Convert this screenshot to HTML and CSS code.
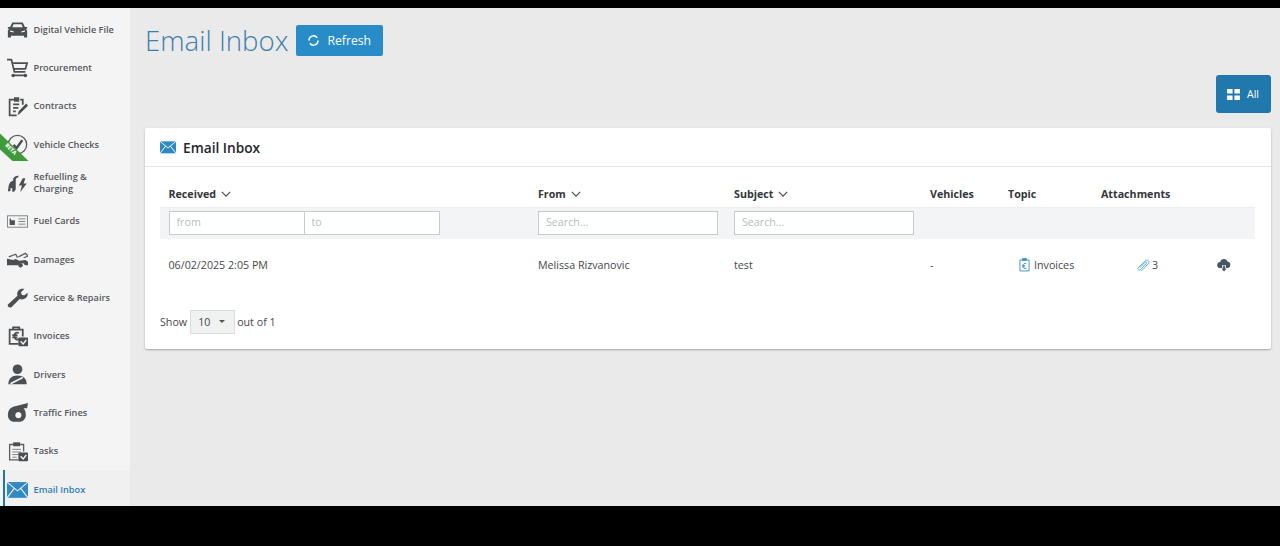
FILE: index.html
```html
<!DOCTYPE html>
<html lang="en">
<head>
<meta charset="utf-8">
<title>Email Inbox</title>
<link rel="stylesheet" href="styles.css">
</head>
<body>
<div class="frame">
  <nav class="sidebar">
    <a class="nav-item"><svg class="nav-icon" viewBox="0 0 24 24"><path fill-rule="evenodd" d="M6 4h12l2.500 5H23v2h-1.500l1.500 2v8h-3.500v-2h-15v2H1v-8l1.500-2H1V9h2.500zM7.500 6L6 9.500h12L16.500 6zM3.500 13v1.500l4 1V14zM20.500 13l-4 1v1.500l4-1z"/></svg><span>Digital Vehicle File</span></a>
    <a class="nav-item"><svg class="nav-icon" viewBox="0 0 24 24"><path class="stroke" d="M0 3h5l3.500 14H21M6 7h17l-2 6.500H7.500M6 21h16"/><circle cx="7" cy="21" r="2"/><circle cx="21" cy="21" r="2"/></svg><span>Procurement</span></a>
    <a class="nav-item"><svg class="nav-icon" viewBox="0 0 24 24"><path class="stroke" d="M18 10V4h-3M8 4H3v18h8M7 9.500h7M7 13.500h6M7 17.500h3"/><path d="M8 1.500h6v5H8zM12 22l1.500-5L22 8.500l2 2.500-8.500 8.500z"/></svg><span>Contracts</span></a>
    <a class="nav-item beta-item"><svg class="nav-icon" viewBox="0 0 24 24"><circle class="mid" cx="12" cy="12" r="10.500"/><path class="stroke thick" d="M7.500 12.500l3.500 3.500 6.500-9"/></svg><span>Vehicle Checks</span><b class="beta"><i>BETA</i></b></a>
    <a class="nav-item"><svg class="nav-icon" viewBox="0 0 24 24"><path d="M1 22l1-7c1-3 2.500-4.500 5-5V8c1-2.500 3-3.500 6-4v2c-1.500.300-2.500 1-3 2.500V20l-2 2.500H6v-4H4V22z M18 7l-4.500 8.500h3.500L15 23l7.500-10H19l2-6z"/></svg><span>Refuelling &amp; Charging</span></a>
    <a class="nav-item"><svg class="nav-icon" viewBox="0 0 24 24"><rect class="thin" x="0.500" y="5.500" width="23" height="13"/><path d="M3 8.500h1.500v2H9V16H3z"/><path class="thin" d="M13 9h8M13 12h8M13 15h8"/></svg><span>Fuel Cards</span></a>
    <a class="nav-item"><svg class="nav-icon" viewBox="0 0 24 24"><path d="M0 11l7 1.500 3-1 4 2 7-1 3 2v4h-3.500a4 4 0 0 0-7.500 0H0z"/><circle cx="15.500" cy="18.500" r="2.500"/><path class="mid" d="M2 9l8-3 2 4M13 9l8-4 3 3-5 2"/></svg><span>Damages</span></a>
    <a class="nav-item"><svg class="nav-icon" viewBox="0 0 24 24"><path d="M1 20l11-10c-1-3 0-6 3-7.500 2-1 3.500-.5 5-.5l-4 4 1 3 3 .5 3.500-3c.5 3-.5 5.500-3.500 7-2 1-4 .8-5.500.2L5 23c-1.500 1.500-5-.5-4-3z"/></svg><span>Service &amp; Repairs</span></a>
    <a class="nav-item"><svg class="nav-icon" viewBox="0 0 24 24"><path class="stroke" d="M13 20.500H3V4h15v8M7 4V1.500h7V4"/><path class="stroke" d="M13.500 8c-3-1.500-5 .5-5 3.500s2 5 5 3.500M6 10.500h6M6 13h6"/><rect x="13" y="13" width="11" height="10" rx="1"/><path class="check" d="M15.500 17.500l3 3 3.500-4.500"/></svg><span>Invoices</span></a>
    <a class="nav-item"><svg class="nav-icon" viewBox="0 0 24 24"><circle cx="12" cy="6" r="5.500"/><path d="M1.500 23c0-6.500 4-10 10.500-10s10.500 3.500 10.500 10z"/><path class="belt" d="M4 22.500l14-7"/></svg><span>Drivers</span></a>
    <a class="nav-item"><svg class="nav-icon" viewBox="0 0 24 24"><path fill-rule="evenodd" d="M1 15c0-5 2-8 6-9.500L24 1l-1 6h-4c2 2 2.500 5 2.500 8 0 4-3 7.500-7.500 7.500H8.500C4 22.500 1 19 1 15zm12-3.500c-2 0-3.500 1.500-3.500 3.500s1.500 3.500 3.500 3.500 3.500-1.500 3.500-3.500-1.500-3.500-3.500-3.500z"/></svg><span>Traffic Fines</span></a>
    <a class="nav-item"><svg class="nav-icon" viewBox="0 0 24 24"><path class="mid" d="M13 21.500H3V4h4M15 4h4v8"/><path d="M7 1.500h8V6H7z"/><path class="thin" d="M6 9.500h10M6 12.500h10M6 15.500h7M6 18.500h5"/><rect x="13" y="13" width="11" height="10" rx="1"/><path class="check" d="M15.500 17.500l3 3 3.500-4.500"/></svg><span>Tasks</span></a>
    <a class="nav-item active"><svg class="nav-icon" viewBox="0 0 24 24"><rect x="0" y="3.500" width="24" height="18"/><path class="cut" d="M0 3.500l12 10 12-10M0 21.500l8.500-11M24 21.500l-8.500-11"/></svg><span>Email Inbox</span></a>
  </nav>

  <main class="main">
    <header class="page-head">
      <h1 class="page-title">Email Inbox</h1>
      <button class="btn btn-refresh"><svg class="btn-icon" viewBox="0 0 16 16"><path d="M2.400 8A5.600 5.600 0 0 1 12.500 4.600M13.600 8A5.600 5.600 0 0 1 3.500 11.400"/></svg>Refresh</button>
    </header>
    <div class="filter-row">
      <button class="btn btn-all"><svg class="grid-icon" viewBox="0 0 14 12"><path d="M0 0h6v5H0zM8 0h6v5H8zM0 7h6v5H0zM8 7h6v5H8z"/></svg>All</button>
    </div>

    <section class="card">
      <div class="card-head">
        <svg class="mail-icon" viewBox="0 0 24 24"><rect x="0" y="3.500" width="24" height="18"/><path class="cut-white" d="M0 3.500l12 10 12-10M0 21.500l8.500-11M24 21.500l-8.500-11"/></svg>
        <h2 class="card-title">Email Inbox</h2>
      </div>
      <div class="card-body">
        <table class="inbox">
          <colgroup>
            <col class="c-received"><col class="c-from"><col class="c-subject"><col class="c-vehicles"><col class="c-topic"><col class="c-att"><col>
          </colgroup>
          <thead>
            <tr class="head-row">
              <th>Received <svg class="chev" viewBox="0 0 12 7"><path d="M1 1l5 5 5-5"/></svg></th>
              <th>From <svg class="chev" viewBox="0 0 12 7"><path d="M1 1l5 5 5-5"/></svg></th>
              <th>Subject <svg class="chev" viewBox="0 0 12 7"><path d="M1 1l5 5 5-5"/></svg></th>
              <th>Vehicles</th>
              <th>Topic</th>
              <th>Attachments</th>
              <th></th>
            </tr>
            <tr class="search-row">
              <td><div class="date-range"><input class="field" placeholder="from"><input class="field" placeholder="to"></div></td>
              <td><input class="field wide" placeholder="Search..."></td>
              <td><input class="field wide" placeholder="Search..."></td>
              <td></td><td></td><td></td><td></td>
            </tr>
          </thead>
          <tbody>
            <tr class="data-row">
              <td>06/02/2025 2:05 PM</td>
              <td>Melissa Rizvanovic</td>
              <td>test</td>
              <td>-</td>
              <td><span class="topic"><svg class="topic-icon" viewBox="0 0 12 15"><path class="ti-line" d="M1 2h10v12H1z"/><path class="ti-fill" d="M3.500 0h5v3h-5z"/><path class="ti-line" d="M8 6c-2-1-3.500 0-3.500 2.500S6 12 8 11M3.500 8h3M3.500 9.500h3"/></svg>Invoices</span></td>
              <td><span class="att"><svg class="clip" viewBox="0 0 16 16"><path d="M6 15l8.200-8.500c1.800-2-.5-5.500-3-3.500L2.500 11c-1.500 1.500.5 4 2.500 2.500l7-7.500c.8-1-.5-2-1.500-1.200L4.500 11"/></svg>3</span></td>
              <td class="act"><svg class="cloud" viewBox="0 0 16 16"><path d="M4 11.500a3.500 3.500 0 0 1-.5-7A4.500 4.500 0 0 1 12 4a3.800 3.800 0 0 1 0 7.500H10V8H6v3.500z"/><path d="M7 8.500h2V12h2l-3 3.500L5 12h2z"/></svg></td>
            </tr>
          </tbody>
        </table>
        <div class="pager">
          <span>Show</span>
          <span class="page-size">10<i class="caret"></i></span>
          <span>out of 1</span>
        </div>
      </div>
    </section>
  </main>
</div>
</body>
</html>
```
FILE: styles.css
```css
* { box-sizing: border-box; }
html, body { margin: 0; height: 100%; background: #000; overflow: hidden; }
body { font-family: "Open Sans", "Liberation Sans", sans-serif; color: #3c3f42; font-size: 11px; }
.frame { margin-top: 8px; height: 498px; display: flex; background: #ebeaeb; overflow: hidden; }

.sidebar { width: 130px; flex: none; background: #f4f4f4; padding: 2.500px 0 0 3px; display: flex; flex-direction: column; position: relative; }
.nav-item { height: 38.330px; flex: none; display: flex; align-items: center; gap: 5.500px; padding-left: 4px; font-size: 9.200px; font-weight: 600; line-height: 12px; color: #54585c; position: relative; }
.nav-item span { flex: 1; padding-right: 24px; }
.nav-item:nth-child(1) span, .nav-item:nth-child(7) span, .nav-item:nth-child(8) span { padding-right: 0; }
.nav-icon { width: 21px; height: 21px; flex: none; fill: #4c4f52; }
.nav-icon .stroke { fill: none; stroke: #4c4f52; stroke-width: 2; }
.nav-icon .thick { stroke-width: 2.800; }
.nav-icon .mid { fill: none; stroke: #5a5d60; stroke-width: 1.500; }
.nav-icon .thin { fill: none; stroke: #75787b; stroke-width: 1; }
.nav-icon .check { fill: none; stroke: #f4f4f4; stroke-width: 1.600; }
.nav-icon .belt { fill: none; stroke: #f4f4f4; stroke-width: 2; }
.active { background: #f0f0f0; color: #2f7fb2; border-left: 2px solid #1f77ac; padding-left: 2px; }
.active .nav-icon { fill: #2f8ac4; }
.nav-icon .cut { fill: none; stroke: #f0f0f0; stroke-width: 1.300; }
.beta { position: absolute; left: -3px; top: 8px; width: 29px; height: 28px; background: #3f9a3c; clip-path: polygon(0 0, 100% 100%, 45% 100%, 0 57%); }
.beta i { position: absolute; left: -2px; top: 13px; width: 26px; text-align: center; transform: rotate(45deg); font-size: 5.500px; font-style: normal; font-weight: 700; color: #fff; line-height: 6px; }

.main { flex: 1; min-width: 0; padding: 17px 9px 0 15px; }
.page-head { display: flex; align-items: center; gap: 8px; height: 31px; }
.page-title { margin: 0; font-size: 27.600px; font-weight: 300; color: #3d80ac; line-height: 31px; white-space: nowrap; }
.btn { border: 0; border-radius: 2px; font-family: inherit; color: #fff; display: flex; align-items: center; padding: 0; }
.btn-refresh { width: 87px; height: 31px; background: #278cc8; font-size: 12.200px; gap: 7px; padding-left: 11px; }
.btn-icon { width: 13px; height: 13px; fill: none; stroke: #fff; stroke-width: 1.900; }
.filter-row { display: flex; justify-content: flex-end; margin-top: 19px; }
.btn-all { width: 55px; height: 38px; background: #2078ad; font-size: 10.500px; gap: 7px; padding-left: 11px; border-radius: 3px; }
.grid-icon { width: 13px; height: 11px; fill: #fff; }

.card { margin-top: 15px; height: 221px; background: #fff; border-radius: 2px; box-shadow: 0 1px 2px rgba(0,0,0,.3); }
.card-head { height: 39px; display: flex; align-items: center; gap: 7px; padding-left: 15px; border-bottom: 1px solid #e4e5e6; }
.mail-icon { width: 16px; height: 16px; fill: #2f8ac4; }
.cut-white { fill: none; stroke: #fff; stroke-width: 1.400; }
.card-title { margin: 0; font-size: 13.700px; font-weight: 600; color: #24272a; }
.card-body { padding: 0 16px 0 15px; }

.inbox { width: 100%; border-collapse: collapse; table-layout: fixed; }
.c-received { width: 370px; }
.c-from, .c-subject { width: 196px; }
.c-vehicles { width: 78px; }
.c-topic { width: 93px; }
.c-att { width: 100px; }
.head-row th { height: 40px; padding: 14px 0 0 8px; text-align: left; font-size: 10.700px; font-weight: 700; color: #33363a; vertical-align: middle; white-space: nowrap; }
.head-row th:first-child { padding-left: 8.500px; }
.chev { width: 10px; height: 6px; margin-left: 2px; fill: none; stroke: #4a4d50; stroke-width: 1.400; vertical-align: 1px; }
.search-row td { height: 32px; background: #f3f4f5; padding: 0 0 0 8px; border-top: 1px solid #eceded; }
.search-row td:first-child { padding-left: 8.500px; }
.field { height: 24px; width: 100%; border: 1px solid #c9cacc; background: #fff; font-family: inherit; font-size: 10.700px; padding: 0 7px 2px; color: #555; outline: none; display: block; }
.field::placeholder { color: #b9bbbd; opacity: 1; }
.field.wide { width: 179.500px; }
.date-range { display: flex; width: 271px; }
.date-range .field { flex: 1; min-width: 0; }
.date-range .field + .field { margin-left: -1px; width: 136px; flex: none; }
.data-row td { height: 52px; padding: 0 0 0 8px; font-size: 10.700px; color: #45484b; }
.data-row td:first-child { padding-left: 8.500px; }
.topic { display: flex; align-items: center; gap: 4px; padding-left: 11px; }
.topic-icon { width: 11px; height: 14px; fill: none; }
.ti-line { fill: none; stroke: #3c92c4; stroke-width: 1; }
.ti-fill { fill: #3c92c4; }
.att { display: flex; align-items: center; gap: 2px; padding-left: 35px; }
.clip { width: 14px; height: 14px; fill: none; stroke: #4b9fd0; stroke-width: 1; }
.act { text-align: left; }
.cloud { width: 14px; height: 14px; fill: #47555f; display: block; margin-left: 16px; }

.pager { display: flex; align-items: center; gap: 2px; height: 24px; margin-top: 18.500px; font-size: 10.700px; color: #45484b; }
.page-size { width: 45px; height: 24px; margin-left: 1px; background: #f0f1f1; border: 1px solid #dcdddd; display: flex; align-items: center; padding-left: 7px; gap: 9px; }
.caret { width: 0; height: 0; border: 3px solid transparent; border-top: 3.500px solid #555; border-bottom: 0; }
```
